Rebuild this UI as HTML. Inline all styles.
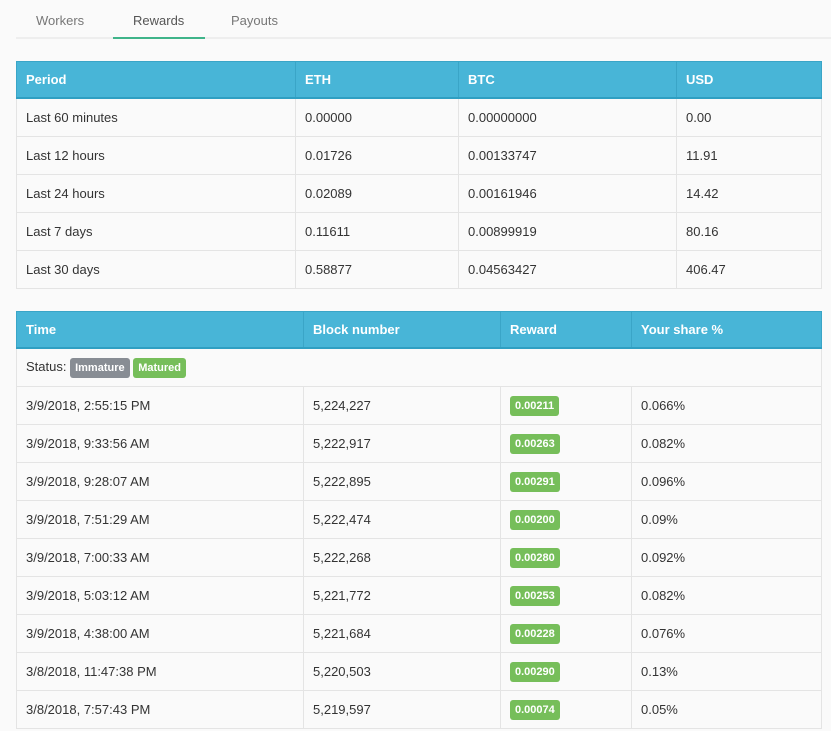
<!DOCTYPE html>
<html><head><style>
body{margin:0;background:#fafafa;font-family:"Liberation Sans",sans-serif;font-size:13px;color:#333;width:831px;height:731px;overflow:hidden;position:relative}
.tabs{position:absolute;left:16px;top:0;width:815px;height:37px;border-bottom:2px solid #eee}
.tab{position:absolute;top:13px;font-size:13px;color:#777}
.act{color:#555}
.ul{position:absolute;left:113px;top:37px;width:92px;height:2px;background:#3fb48a}
table{position:absolute;left:16px;border-collapse:collapse;table-layout:fixed;width:805px}
th{background:#48b5d7;color:#fff;font-weight:bold;text-align:left;padding:0 9px;height:35px;border:1px solid #3aa5c7;border-bottom:2px solid #2f9fc2}
td{padding:0 9px;height:37px;border:1px solid #e4e4e4;background:#fafafa}
.b{display:inline-block;color:#fff;font-weight:bold;font-size:11px;padding:4px 5px;border-radius:3px;background:#76be5a}
.g{background:#888d94}
</style></head><body>
<div class="tabs"></div>
<div class="tab" style="left:36px">Workers</div>
<div class="tab act" style="left:133px">Rewards</div>
<div class="tab" style="left:231px">Payouts</div>
<div class="ul"></div>
<table style="top:61px">
<colgroup><col style="width:279px"><col style="width:163px"><col style="width:218px"><col style="width:145px"></colgroup>
<tr><th>Period</th><th>ETH</th><th>BTC</th><th>USD</th></tr>
<tr><td>Last 60 minutes</td><td>0.00000</td><td>0.00000000</td><td>0.00</td></tr>
<tr><td>Last 12 hours</td><td>0.01726</td><td>0.00133747</td><td>11.91</td></tr>
<tr><td>Last 24 hours</td><td>0.02089</td><td>0.00161946</td><td>14.42</td></tr>
<tr><td>Last 7 days</td><td>0.11611</td><td>0.00899919</td><td>80.16</td></tr>
<tr><td>Last 30 days</td><td>0.58877</td><td>0.04563427</td><td>406.47</td></tr>
</table>
<table style="top:311px">
<colgroup><col style="width:287px"><col style="width:197px"><col style="width:131px"><col style="width:190px"></colgroup>
<tr><th>Time</th><th>Block number</th><th>Reward</th><th>Your share %</th></tr>
<tr><td colspan="4">Status: <span class="b g">Immature</span> <span class="b">Matured</span></td></tr>
<tr><td>3/9/2018, 2:55:15 PM</td><td>5,224,227</td><td><span class="b">0.00211</span></td><td>0.066%</td></tr>
<tr><td>3/9/2018, 9:33:56 AM</td><td>5,222,917</td><td><span class="b">0.00263</span></td><td>0.082%</td></tr>
<tr><td>3/9/2018, 9:28:07 AM</td><td>5,222,895</td><td><span class="b">0.00291</span></td><td>0.096%</td></tr>
<tr><td>3/9/2018, 7:51:29 AM</td><td>5,222,474</td><td><span class="b">0.00200</span></td><td>0.09%</td></tr>
<tr><td>3/9/2018, 7:00:33 AM</td><td>5,222,268</td><td><span class="b">0.00280</span></td><td>0.092%</td></tr>
<tr><td>3/9/2018, 5:03:12 AM</td><td>5,221,772</td><td><span class="b">0.00253</span></td><td>0.082%</td></tr>
<tr><td>3/9/2018, 4:38:00 AM</td><td>5,221,684</td><td><span class="b">0.00228</span></td><td>0.076%</td></tr>
<tr><td>3/8/2018, 11:47:38 PM</td><td>5,220,503</td><td><span class="b">0.00290</span></td><td>0.13%</td></tr>
<tr><td>3/8/2018, 7:57:43 PM</td><td>5,219,597</td><td><span class="b">0.00074</span></td><td>0.05%</td></tr>
</table>
</body></html>
